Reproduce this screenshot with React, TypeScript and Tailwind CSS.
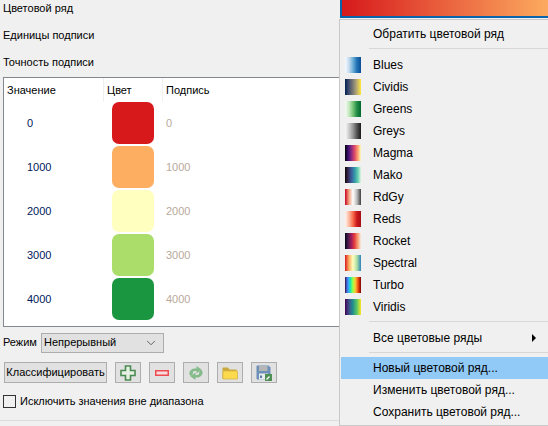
import React from 'react';
import { ChevronDown } from 'lucide-react';

const rows = [
  { value: '0', color: 'bg-[#d7191c]' },
  { value: '1000', color: 'bg-[#fdae61]' },
  { value: '2000', color: 'bg-[#ffffbf]' },
  { value: '3000', color: 'bg-[#abdd6a]' },
  { value: '4000', color: 'bg-[#1a9641]' },
];

const ramps = [
  { name: 'Blues', bg: 'bg-[linear-gradient(90deg,#f7fbff,#c6dbef,#6baed6,#2171b5,#0b4f96)]' },
  { name: 'Cividis', bg: 'bg-[linear-gradient(90deg,#00224e,#35456c,#666970,#948f78,#cbba69,#fee838)]' },
  { name: 'Greens', bg: 'bg-[linear-gradient(90deg,#f7fcf5,#c7e9c0,#74c476,#238b45,#00692c)]' },
  { name: 'Greys', bg: 'bg-[linear-gradient(90deg,#fafafa,#cccccc,#969696,#525252,#1a1a1a)]' },
  { name: 'Magma', bg: 'bg-[linear-gradient(90deg,#000004,#3b0f70,#8c2981,#de4968,#fe9f6d,#fcfdbf)]' },
  { name: 'Mako', bg: 'bg-[linear-gradient(90deg,#0b0405,#382a54,#395d9c,#3496a9,#60ceac,#def5e5)]' },
  { name: 'RdGy', bg: 'bg-[linear-gradient(90deg,#ca0020,#f4a582,#ffffff,#bababa,#404040)]' },
  { name: 'Reds', bg: 'bg-[linear-gradient(90deg,#fff5f0,#fcbba1,#fb6a4a,#cb181d,#a50f15)]' },
  { name: 'Rocket', bg: 'bg-[linear-gradient(90deg,#03051a,#4c1d4b,#a11a5b,#e83f3f,#f69c73,#faebdd)]' },
  { name: 'Spectral', bg: 'bg-[linear-gradient(90deg,#d7191c,#fdae61,#ffffbf,#abdda4,#2b83ba)]' },
  { name: 'Turbo', bg: 'bg-[linear-gradient(90deg,#30123b,#4662d7,#36aaf9,#1ae4b6,#72fe5e,#c8ef34,#faba39,#f66b19,#ca2a04,#7a0403)]' },
  { name: 'Viridis', bg: 'bg-[linear-gradient(90deg,#440154,#3b528b,#21918c,#5ec962,#fde725)]' },
];

function MenuItem({ label, active }: { label: string; active?: boolean }) {
  return (
    <div className={`h-[22px] flex items-center pl-[32px] ${active ? 'bg-[#91c9f7]' : ''}`}>
      {label}
    </div>
  );
}

function IconButton({ children }: { children: React.ReactNode }) {
  return (
    <button className="w-[26px] h-[21px] bg-[#e1e1e1] border border-[#adadad] flex items-center justify-center">
      {children}
    </button>
  );
}

export default function App() {
  return (
    <div className="w-[548px] h-[426px] overflow-hidden bg-[#f0f0f0] flex text-[11px] text-black font-['Liberation_Sans',sans-serif]">
      {/* Left panel */}
      <div className="w-[339px] shrink-0 flex flex-col h-full">
        <div className="h-[16px] pl-[3px] flex items-center">Цветовой ряд</div>
        <div className="h-[16px] mt-[11px] pl-[3px] flex items-center">Единицы подписи</div>
        <div className="h-[16px] mt-[11px] pl-[3px] flex items-center">Точность подписи</div>

        {/* Table */}
        <div className="mt-[7px] ml-[3px] h-[250px] bg-white border border-[#828790] border-r-0">
          <div className="flex h-[24px]">
            <div className="w-[100px] pl-[3px] border-r border-[#f0f0f0] flex items-center">Значение</div>
            <div className="w-[59px] pl-[3px] border-r border-[#f0f0f0] flex items-center">Цвет</div>
            <div className="pl-[3px] flex items-center">Подпись</div>
          </div>
          {rows.map((row) => (
            <div key={row.value} className="flex h-[44px] pb-[2px]">
              <div className="w-[100px] pl-[23px] flex items-center text-[#00205c]">{row.value}</div>
              <div className="w-[59px] pl-[8px] flex items-center">
                <div className={`w-[42px] h-[42px] rounded-[7px] ${row.color}`} />
              </div>
              <div className="pl-[3px] flex items-center text-[#b9a99b]">{row.value}</div>
            </div>
          ))}
        </div>

        {/* Mode select */}
        <div className="mt-[6px] pl-[3px] flex items-center h-[19px]">
          <span className="w-[38px]">Режим</span>
          <div className="w-[123px] h-[20px] bg-[#e1e1e1] border border-[#adadad] flex items-center justify-between pl-[2px] pr-[5px]">
            <span>Непрерывный</span>
            <ChevronDown size={14} strokeWidth={1.25} className="text-[#333]" />
          </div>
        </div>

        {/* Buttons */}
        <div className="mt-[10px] pl-[4px] flex items-center gap-[8px]">
          <button className="w-[103px] h-[21px] bg-[#e1e1e1] border border-[#adadad] flex items-center justify-center">
            Классифицировать
          </button>
          <IconButton>
            <svg width="16" height="16" viewBox="0 0 16 16">
              <path d="M5.500 1h5v4.500H15v5h-4.500V15h-5v-4.500H1v-5h4.500z" fill="#e6f0e2" stroke="#4a8a50" strokeWidth="1.600" />
            </svg>
          </IconButton>
          <IconButton>
            <svg width="14" height="6" viewBox="0 0 14 6">
              <rect x="0.750" y="0.750" width="12.500" height="4.500" fill="#f6dcdc" stroke="#ee4b50" strokeWidth="1.500" />
            </svg>
          </IconButton>
          <IconButton>
            <svg width="16" height="16" viewBox="0 0 16 16" fill="#85ba8a">
              <path d="M1.500 9.500C1 6 3.500 3.500 7 3.500h1.500V1l5 3.500-5 4V6H7C5 6 4.500 7.500 5 9L3 11.500z" />
              <path d="M14.500 6.500C15 10 12.500 12.500 9 12.500H7.500V15l-5-3.500 5-4V10H9c2 0 2.500-1.500 2-3l2-2.500z" />
            </svg>
          </IconButton>
          <IconButton>
            <svg width="16" height="14" viewBox="0 0 16 14">
              <path d="M0.500 13V1.500h5.500l1.500 2h7V13z" fill="#c9a93c" />
              <path d="M1 13l0-8h14.500V13z" fill="#fdd94e" stroke="#d4b544" strokeWidth="0.800" />
            </svg>
          </IconButton>
          <IconButton>
            <svg width="16" height="16" viewBox="0 0 16 16">
              <path d="M0.500 1.500C0.500 1 1 0.500 1.500 0.500H12.500L14.500 2.500V14.500H1.500C1 14.500 0.500 14 0.500 13.500z" fill="#6d8fb8" />
              <rect x="3" y="1" width="8.500" height="5" fill="#b6b6b6" />
              <rect x="3" y="8.500" width="9" height="6" fill="#e9ecef" />
              <rect x="4" y="10.500" width="2" height="2.500" fill="#5a7ba3" />
              <rect x="9" y="9" width="7" height="7" fill="#4f8f55" />
              <path d="M10.500 14.500l3-3" stroke="#fff" strokeWidth="1.300" />
            </svg>
          </IconButton>
        </div>

        {/* Checkbox */}
        <div className="mt-[11px] pl-[3px] flex items-center h-[14px] gap-[4px]">
          <div className="w-[13px] h-[13px] bg-[#f0f0f0] border border-[#333333]" />
          <span>Исключить значения вне диапазона</span>
        </div>

        <div className="mt-[12px] border-t border-[#dcdcdc]" />
      </div>

      {/* Right column: colour ramp button + open menu */}
      <div className="flex-1 min-w-0 flex flex-col text-[12px]">
        <div className="h-[18px] ml-[1px] border-x-2 border-b-2 border-[#0a64ad] bg-[linear-gradient(90deg,#d7191c,#fdae61_100%)] w-[215px]" />
        <div className="mt-[1px] h-[407px] bg-[#f0f0f0] border border-[#c8c8c8] border-r-0 flex flex-col pl-[1px] pt-[3px]">
          <MenuItem label="Обратить цветовой ряд" />
          <div className="ml-[28px] mt-[3px] mb-[5px] border-t border-[#d7d7d7]" />
          <div className="flex flex-col">
            {ramps.map((ramp) => (
              <div key={ramp.name} className="h-[22px] flex items-center">
                <div className={`w-[16px] h-[16px] ml-[4px] shrink-0 ${ramp.bg}`} />
                <span className="ml-[12px]">{ramp.name}</span>
              </div>
            ))}
          </div>
          <div className="ml-[28px] mt-[3px] mb-[5px] border-t border-[#d7d7d7]" />
          <div className="h-[22px] flex items-center pl-[32px] relative">
            Все цветовые ряды
            <span className="absolute left-[191px] top-[7px] w-0 h-0 border-y-[4px] border-y-transparent border-l-[4px] border-l-black" />
          </div>
          <div className="ml-[28px] mt-[3px] mb-[4px] border-t border-[#d7d7d7]" />
          <MenuItem label="Новый цветовой ряд..." active />
          <MenuItem label="Изменить цветовой ряд..." />
          <MenuItem label="Сохранить цветовой ряд..." />
        </div>
      </div>
    </div>
  );
}
